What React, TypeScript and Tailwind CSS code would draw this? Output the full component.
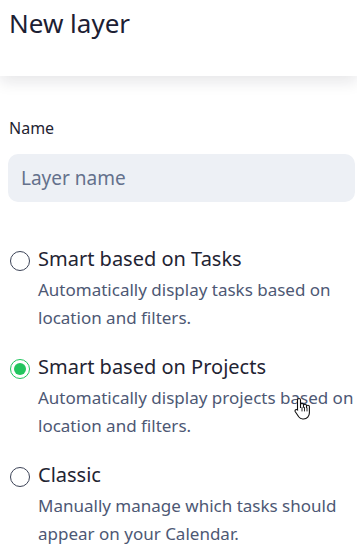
import { useState } from 'react';

const options = [
  { id: 'tasks', label: 'Smart based on Tasks', desc: 'Automatically display tasks based on location and filters.' },
  { id: 'projects', label: 'Smart based on Projects', desc: 'Automatically display projects based on location and filters.' },
  { id: 'classic', label: 'Classic', desc: 'Manually manage which tasks should appear on your Calendar.' },
];

function HandCursor() {
  return (
    <svg width="18" height="24" viewBox="0 0 18 24" className="absolute left-[294px] top-[397px] pointer-events-none">
      <path
        d="M5 1.5c.9 0 1.5.7 1.5 1.5v7.5V7.8c0-.8.7-1.4 1.5-1.4s1.5.6 1.5 1.4v2.4-1.6c0-.8.7-1.4 1.5-1.4s1.5.6 1.5 1.4v2-1c0-.8.7-1.4 1.4-1.4.8 0 1.5.6 1.5 1.4v6.2c0 3.4-2.4 6.2-5.8 6.2H8.7c-1.8 0-3-.8-4-2.2L1.3 14.8c-.5-.8-.3-1.700.4-2.100.7-.4 1.500-.2 2 .4L3.5 13V3c0-.8.6-1.5 1.5-1.5z"
        fill="#fff"
        stroke="#111"
        strokeWidth="1.1"
        strokeLinejoin="round"
      />
      <path d="M8 10.5v3.5M10.5 10.5v3.5M13 11v3" stroke="#111" strokeWidth="0.9" strokeLinecap="round" />
    </svg>
  );
}

export default function App() {
  const [selected, setSelected] = useState('projects');

  return (
    <div className="relative w-[357px] h-[549px] overflow-hidden bg-white font-['Noto_Sans',sans-serif]">
      {/* Header */}
      <header className="relative z-10 h-[76px] bg-white shadow-[0_6px_14px_rgba(15,23,42,0.1)] px-[9px] pt-[5px]">
        <h1 className="text-[26px] leading-[36px] text-[#1c2033] font-normal">New layer</h1>
      </header>

      {/* Name field */}
      <div className="pt-[42px]">
        <label className="block pl-[9px] text-[16px] leading-[20px] text-[#1f2433]">Name</label>
        <input
          placeholder="Layer name"
          className="mt-[16px] ml-[8px] w-[347px] h-[48px] rounded-[10px] bg-[#edf0f5] px-[13px] text-[19px] text-[#1f2433] placeholder:text-[#64718c] outline-none"
        />
      </div>

      {/* Options */}
      <div className="mt-[42px] flex flex-col gap-[20px] pl-[10px]">
        {options.map((o) => {
          const active = selected === o.id;
          return (
            <button key={o.id} onClick={() => setSelected(o.id)} className="flex items-start gap-[8px] text-left">
              <span
                className={`mt-[7px] w-[20px] h-[20px] shrink-0 rounded-full border flex items-center justify-center ${
                  active ? 'border-[#22c55e]' : 'border-[#3c4357]'
                }`}
              >
                {active && <span className="w-[12px] h-[12px] rounded-full bg-[#22c55e]" />}
              </span>
              <span className="flex flex-col">
                <span className="text-[20px] leading-[30px] text-[#1f2433]">{o.label}</span>
                <span className="mt-[2px] text-[17px] leading-[28px] text-[#4d5874]">{o.desc}</span>
              </span>
            </button>
          );
        })}
      </div>

      <HandCursor />
    </div>
  );
}
